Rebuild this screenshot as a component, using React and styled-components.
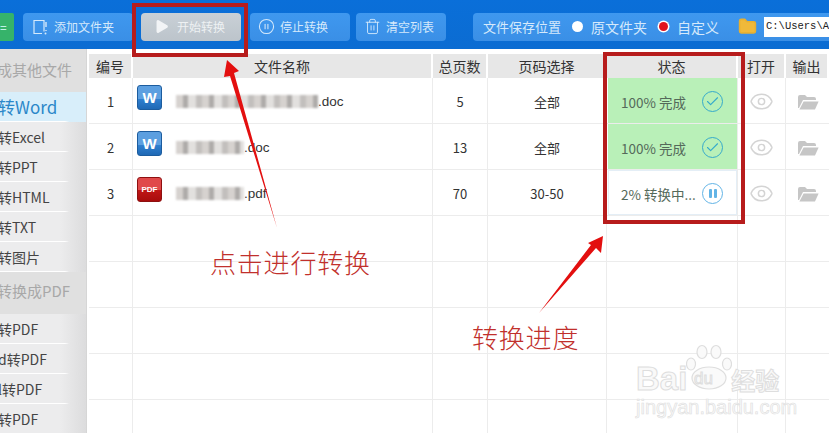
import React from "react";
import styled, { createGlobalStyle } from "styled-components";
import { Check, Play, Trash2, Folder, Eye, CirclePause } from "lucide-react";

const GlobalStyle = createGlobalStyle`
  html, body { margin: 0; padding: 0; background: #fff; overflow: hidden; }
  * { box-sizing: border-box; }
`;

const font = `"Noto Sans CJK SC", "Liberation Sans", sans-serif`;

const Page = styled.div`
  position: relative;
  width: 829px;
  height: 433px;
  overflow: hidden;
  font-family: ${font};
  color: #333;
`;

const TopBar = styled.div`
  height: 49px;
  background: linear-gradient(#0a6fd9, #0b6cd2);
  display: flex;
  align-items: center;
  padding-top: 4px;
`;

const GreenTab = styled.div`
  width: 14px;
  height: 28px;
  margin-right: 9px;
  background: #36b36a;
  color: #dff;
  font-size: 12px;
  line-height: 28px;
  border-radius: 0 2px 2px 0;
  overflow: hidden;
`;

const ToolButton = styled.div`
  width: ${(p) => p.$w}px;
  height: 28px;
  margin-right: ${(p) => p.$gap}px;
  display: flex;
  align-items: center;
  justify-content: ${(p) => (p.$start ? "center" : "flex-start")};
  gap: ${(p) => (p.$start ? 7 : 5)}px;
  padding-left: ${(p) => (p.$start ? 0 : 8)}px;
  padding-right: ${(p) => (p.$start ? 4 : 0)}px;
  border-radius: 4px;
  font-size: 12px;
  color: ${(p) => (p.$start ? "#eef1f3" : "#d5e9fb")};
  background: ${(p) =>
    p.$start
      ? "linear-gradient(#c9d0d6, #bcc4cb)"
      : "linear-gradient(#3f98ef, #3a8fe6)"};
`;

const SaveGroup = styled.div`
  flex: 1;
  height: 28px;
  margin-left: 27px;
  display: flex;
  align-items: center;
  padding-left: 10px;
  border-radius: 4px 0 0 4px;
  background: linear-gradient(#3f98ef, #3a8fe6);
  color: #d5e9fb;
  font-size: 13px;
  white-space: nowrap;
`;

const SaveOption = styled.span`
  font-size: 14px;
`;

const Radio = styled.span`
  width: ${(p) => (p.$on ? 9 : 11)}px;
  height: ${(p) => (p.$on ? 9 : 11)}px;
  margin: 0 ${(p) => (p.$on ? 9 : 8)}px 0 ${(p) => p.$ml}px;
  border-radius: 50%;
  background: ${(p) => (p.$on ? "#e0141e" : "#fff")};
  box-shadow: ${(p) => (p.$on ? "0 0 0 1.5px #fff" : "none")};
`;

const PathBox = styled.div`
  flex: 1;
  height: 20px;
  margin-left: 7px;
  padding-left: 2px;
  background: #fff;
  color: #222;
  font-family: "Liberation Mono", monospace;
  font-size: 10.5px;
  line-height: 18px;
  overflow: hidden;
`;

const SaveFolder = styled(Folder)`
  margin-left: 19px;
`;

const Body = styled.div`
  display: flex;
  height: 384px;
`;

const Side = styled.div`
  width: 87px;
  flex: none;
  overflow: hidden;
  background: #e9e9ea;
  border-right: 1px solid #d6d6d6;
`;

const SideHead = styled.div`
  height: ${(p) => p.$h}px;
  margin-bottom: ${(p) => p.$mb || 0}px;
  padding-top: ${(p) => p.$pt}px;
  background: #e0e0e0;
  color: #a8a8a8;
  font-size: 15px;
  line-height: 22px;
  white-space: nowrap;
  text-indent: -3px;
`;

const SideItem = styled.div`
  height: 30px;
  line-height: 30px;
  font-size: ${(p) => (p.$active ? 17 : 14)}px;
  color: ${(p) => (p.$active ? "#2b87c9" : "#444")};
  background: ${(p) =>
    p.$active ? "#d8eefa" : "linear-gradient(90deg, #ececed 70%, #dcdcdd)"};
  border-bottom: 1px solid transparent;
  border-image: linear-gradient(90deg, #fff 75%, transparent 80%) 1;
  white-space: nowrap;
  text-indent: -2px;
`;

const Main = styled.div`
  flex: 1;
  padding: 5px 0 0 1px;
  border-left: 1px solid #fff;
  min-width: 0;
`;

const columns = "44px 300px 55px 119px 131px 48px 43px";

const HeadRow = styled.div`
  display: grid;
  grid-template-columns: ${columns};
  height: 24px;
`;

const HeadCell = styled.div`
  background: #e7e7e7;
  border-right: 2px solid #fff;
  font-size: 14px;
  line-height: 24px;
  color: #333;
  text-align: center;
  white-space: nowrap;
`;

const Row = styled.div`
  display: grid;
  grid-template-columns: ${columns};
  height: 46px;
  border-bottom: 1px solid #ececec;
`;

const Cell = styled.div`
  display: flex;
  align-items: center;
  justify-content: center;
  padding-top: 2px;
  border-right: 1px solid #ececec;
  font-size: 13px;
  color: #333;
  &:last-child { border-right: none; }
`;

const NameCell = styled(Cell)`
  justify-content: flex-start;
  padding: 0 0 0 4px;
`;

const FileIcon = styled.div`
  width: 25px;
  height: 25px;
  margin: -6px 14px 0 0;
  border-radius: 3px;
  border: 1px solid ${(p) => (p.$pdf ? "#8e1010" : "#1c5c9e")};
  background: ${(p) =>
    p.$pdf
      ? "linear-gradient(#e0494a 0 52%, #c01616 52%, #a80c0c)"
      : "linear-gradient(#5c9fe0 0 58%, #2f7fcf 58%, #1f69b5)"};
  color: #fff;
  font: bold ${(p) => (p.$pdf ? 8 : 15)}px/23px "Liberation Sans", sans-serif;
  text-align: center;
`;

// pixelated stand-in for the blanked part of a file name
const Blurred = styled.span`
  display: inline-block;
  width: ${(p) => p.$w}px;
  height: 13px;
  filter: blur(1.2px);
  background: repeating-linear-gradient(
    90deg,
    #d6d2cf 0 7px,
    #aeaba9 7px 12px,
    #e2e0de 12px 20px,
    #c2bfbd 20px 26px
  );
`;

const NameText = styled.span`
  display: flex;
  align-items: center;
  margin-top: 2px;
  font-family: "Liberation Sans", sans-serif;
  font-size: 13.5px;
  color: #333;
`;

const StatusCell = styled(Cell)`
  justify-content: space-between;
  padding: 2px 14px 0 13px;
  margin-left: 1px;
  font-size: 13.5px;
  color: #54695a;
  background: ${(p) => (p.$done ? "#b9f0b8" : "#fff")};
  box-shadow: ${(p) => (p.$done ? "none" : "inset 0 0 0 1px #e4eef6")};
  white-space: nowrap;
`;

const RoundIcon = styled.span`
  width: 21px;
  height: 21px;
  flex: none;
  display: flex;
  align-items: center;
  justify-content: center;
  gap: 2px;
  border-radius: 50%;
  border: 1.6px solid ${(p) => (p.$paused ? "#62b4e6" : "#35aacb")};
  color: #35aacb;
`;

const PauseBar = styled.i`
  width: 3px;
  height: 9px;
  border-radius: 1px;
  background: #62b4e6;
`;

const Callout = styled.div`
  position: absolute;
  left: ${(p) => p.$x}px;
  top: ${(p) => p.$y}px;
  width: ${(p) => p.$w}px;
  height: ${(p) => p.$h}px;
  border: 4px solid #b71c1c;
`;

const Arrows = styled.svg`
  position: absolute;
  left: 0;
  top: 0;
`;

const Note = styled.div`
  position: absolute;
  left: ${(p) => p.$x}px;
  top: ${(p) => p.$y}px;
  color: #c1302c;
  font-size: 26px;
  font-weight: 300;
  letter-spacing: 0.8px;
  line-height: 30px;
  white-space: nowrap;
`;

const Watermark = styled.div`
  position: absolute;
  left: 636px;
  top: 344px;
  width: 150px;
  height: 72px;
  color: #f9f9f9;
  font-family: "Liberation Sans", sans-serif;
  -webkit-text-stroke: 1px #dedede;
`;

const MarkTitle = styled.div`
  display: flex;
  align-items: baseline;
  margin-top: 19px;
  font-size: 33px;
  font-weight: bold;
  line-height: 32px;
  white-space: nowrap;
`;

const MarkCn = styled.span`
  margin-left: 44px;
  font-family: "Noto Sans CJK SC", sans-serif;
  font-size: 24px;
`;

const MarkDu = styled.span`
  position: absolute;
  left: 58px;
  top: 25px;
  font-size: 17px;
  line-height: 20px;
`;

const MarkUrl = styled.div`
  font-size: 20px;
  line-height: 22px;
  white-space: nowrap;
  -webkit-text-stroke: 0.6px #dedede;
`;

const MarkPaw = styled.svg`
  position: absolute;
  left: 50px;
  top: 0;
`;

const sideTop = ["转Excel", "转PPT", "转HTML", "转TXT", "转图片"];
const sideBottom = ["转PDF", "d转PDF", "l转PDF", "转PDF"];

const rows = [
  { no: 1, type: "W", blur: 142, ext: ".doc", pages: 5, range: "全部", state: "100% 完成", done: true },
  { no: 2, type: "W", blur: 68, ext: ".doc", pages: 13, range: "全部", state: "100% 完成", done: true },
  { no: 3, type: "PDF", blur: 68, ext: ".pdf", pages: 70, range: "30-50", state: "2% 转换中...", done: false },
];

const blanks = [1, 2, 3, 4, 5];

function AddFolderIcon() {
  return (
    <svg width="18" height="18" viewBox="0 0 18 18" fill="none" stroke="currentColor" strokeWidth="1.2">
      <path d="M13 13.5V2.5H3v13h8" />
      <path d="M15 4v5M15 12v1" strokeWidth="1.4" />
      <circle cx="14.5" cy="15.5" r="1" fill="currentColor" stroke="none" />
    </svg>
  );
}

function OpenFolderIcon() {
  return (
    <svg width="22" height="18" viewBox="0 0 22 18" fill="#c6c6c6">
      <path d="M1 4a2 2 0 0 1 2-2h5l2 2h7a2 2 0 0 1 2 2v1H6L2 15H1z" />
      <path d="M6.6 8.5H21.6L18 16.5H2.4z" />
    </svg>
  );
}

function App() {
  return (
    <Page>
      <GlobalStyle />
      <TopBar>
        <GreenTab>=</GreenTab>
        <ToolButton $w={110} $gap={8}>
          <AddFolderIcon />
          添加文件夹
        </ToolButton>
        <ToolButton $w={100} $gap={9} $start>
          <Play size={17} fill="#f2f4f6" strokeWidth={0} />
          开始转换
        </ToolButton>
        <ToolButton $w={100} $gap={6}>
          <CirclePause size={17} strokeWidth={1.5} />
          停止转换
        </ToolButton>
        <ToolButton $w={90} $gap={0}>
          <Trash2 size={17} strokeWidth={1.3} />
          清空列表
        </ToolButton>
        <SaveGroup>
          文件保存位置
          <Radio $ml={11} />
          <SaveOption>原文件夹</SaveOption>
          <Radio $ml={12} $on />
          <SaveOption>自定义</SaveOption>
          <SaveFolder size={19} fill="#f0b93a" color="#e8b030" />
          <PathBox>C:\Users\A</PathBox>
        </SaveGroup>
      </TopBar>
      <Body>
        <Side>
          <SideHead $h={43} $pt={10}>成其他文件</SideHead>
          <SideItem $active>转Word</SideItem>
          {sideTop.map((label) => (
            <SideItem key={label}>{label}</SideItem>
          ))}
          <SideHead $h={42} $pt={8}>转换成PDF</SideHead>
          {sideBottom.map((label, i) => (
            <SideItem key={i}>{label}</SideItem>
          ))}
        </Side>
        <Main>
          <HeadRow>
            <HeadCell>编号</HeadCell>
            <HeadCell>文件名称</HeadCell>
            <HeadCell>总页数</HeadCell>
            <HeadCell>页码选择</HeadCell>
            <HeadCell>状态</HeadCell>
            <HeadCell>打开</HeadCell>
            <HeadCell>输出</HeadCell>
          </HeadRow>
          {rows.map((r) => (
            <Row key={r.no}>
              <Cell>{r.no}</Cell>
              <NameCell>
                <FileIcon $pdf={r.type === "PDF"}>{r.type}</FileIcon>
                <NameText>
                  <Blurred $w={r.blur} />
                  {r.ext}
                </NameText>
              </NameCell>
              <Cell>{r.pages}</Cell>
              <Cell>{r.range}</Cell>
              <StatusCell $done={r.done}>
                {r.state}
                <RoundIcon $paused={!r.done}>
                  {r.done ? (
                    <Check size={15} strokeWidth={1.8} />
                  ) : (
                    <>
                      <PauseBar />
                      <PauseBar />
                    </>
                  )}
                </RoundIcon>
              </StatusCell>
              <Cell>
                <Eye size={25} color="#d4d4d4" strokeWidth={1.4} />
              </Cell>
              <Cell>
                <OpenFolderIcon />
              </Cell>
            </Row>
          ))}
          {blanks.map((n) => (
            <Row key={n}>
              <Cell />
              <Cell />
              <Cell />
              <Cell />
              <Cell />
              <Cell />
              <Cell />
            </Row>
          ))}
        </Main>
      </Body>

      <Watermark>
        <MarkPaw width="46" height="46" viewBox="0 0 46 46" fill="#fafafa" stroke="#dedede" strokeWidth="1.2">
          <ellipse cx="5" cy="20" rx="4.5" ry="6" />
          <ellipse cx="16" cy="8" rx="5" ry="6.5" />
          <ellipse cx="30" cy="8" rx="5" ry="6.5" />
          <ellipse cx="41" cy="20" rx="4.5" ry="6" />
          <ellipse cx="23" cy="34" rx="17" ry="11" />
        </MarkPaw>
        <MarkTitle>
          Bai<MarkCn>经验</MarkCn>
        </MarkTitle>
        <MarkDu>du</MarkDu>
        <MarkUrl>jingyan.baidu.com</MarkUrl>
      </Watermark>

      <Callout $x={132} $y={3} $w={116} $h={54} />
      <Callout $x={603} $y={52} $w={142} $h={172} />
      <Arrows width="829" height="433" viewBox="0 0 829 433" fill="#e30f0f">
        <polygon points="227,60 239,71 234,73 277,228 230,76 224,77" />
        <polygon points="603,236 601,253 596,248 539,313 591,245 588,243" />
      </Arrows>
      <Note $x={210} $y={247}>点击进行转换</Note>
      <Note $x={472} $y={322}>转换进度</Note>
    </Page>
  );
}

export default App;
